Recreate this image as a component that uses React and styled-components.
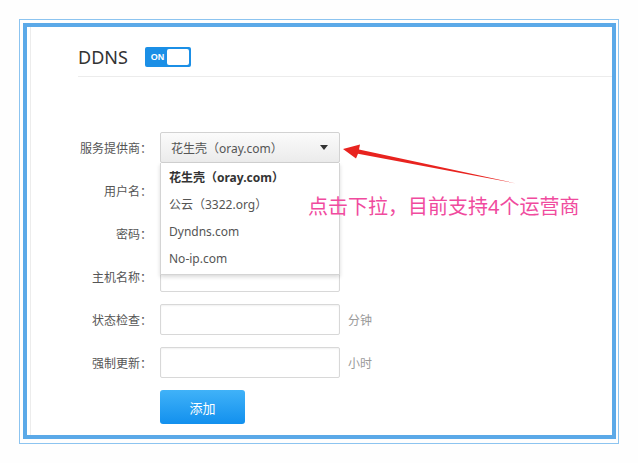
import React from "react";
import styled, { createGlobalStyle } from "styled-components";

const GlobalStyle = createGlobalStyle`
  body {
    margin: 0;
    background: #fff;
    font-family: "Noto Sans", "Noto Sans CJK SC", sans-serif;
  }
  * {
    box-sizing: border-box;
  }
`;

const providers = ["花生壳（oray.com）", "公云（3322.org）", "Dyndns.com", "No-ip.com"];

const fields = [
  { label: "用户名：" },
  { label: "密码：" },
  { label: "主机名称：" },
  { label: "状态检查：", unit: "分钟" },
  { label: "强制更新：", unit: "小时" },
];

const App = () => {
  return (
    <Page>
      <GlobalStyle />
      <Frame>
        <Inner>
          <Panel>
            <Header>
              <Title>DDNS</Title>
              <Toggle>
                <ToggleText>ON</ToggleText>
                <Knob />
              </Toggle>
            </Header>
            <Form>
              <Label>服务提供商：</Label>
              <SelectWrap>
                <Select>
                  <span>花生壳（oray.com）</span>
                  <Caret />
                </Select>
                <Menu>
                  {providers.map((p, i) => (
                    <MenuItem key={p} active={i === 0}>
                      {p}
                    </MenuItem>
                  ))}
                </Menu>
              </SelectWrap>
              <span />
              {fields.map((f) => (
                <React.Fragment key={f.label}>
                  <Label>{f.label}</Label>
                  <Input type="text" />
                  <Unit>{f.unit || ""}</Unit>
                </React.Fragment>
              ))}
              <span />
              <Button>添加</Button>
            </Form>
          </Panel>
        </Inner>
      </Frame>

      <Arrow width="180" height="46" viewBox="340 142 180 46">
        <polygon
          points="343,149 360,144.5 359,149.6 516,183.4 358,153.8 356,158.5"
          fill="#e8231f"
        />
      </Arrow>
      <Note>点击下拉，目前支持4个运营商</Note>
    </Page>
  );
};

const Page = styled.div`
  position: relative;
  width: 638px;
  height: 463px;
  padding: 19px;
  background: #fefefe;
`;

const Frame = styled.div`
  width: 600px;
  height: 425px;
  border: 1px solid #8cc4f0;
  padding: 3px 2px 4px 3px;
`;

const Inner = styled.div`
  height: 100%;
  border: 4px solid #5ba9e8;
  background: #fff;
`;

const Panel = styled.div`
  height: 100%;
  margin-left: 3px;
  border-left: 1px solid #ececec;
  padding: 20px 0 0 47px;
`;

const Header = styled.div`
  display: flex;
  align-items: center;
  box-sizing: content-box;
  height: 20px;
  padding-bottom: 9px;
  border-bottom: 1px solid #ececec;
`;

const Title = styled.h1`
  margin: 0;
  font-size: 18px;
  font-weight: 400;
  color: #333;
  line-height: 20px;
`;

const Toggle = styled.div`
  display: flex;
  align-items: center;
  justify-content: space-between;
  width: 46px;
  height: 20px;
  margin-left: 17px;
  padding: 2px;
  border-radius: 2px;
  background: #1b8fe6;
`;

const ToggleText = styled.span`
  font-family: "Liberation Sans", sans-serif;
  font-size: 9px;
  font-weight: 700;
  color: #fff;
  padding-left: 4px;
`;

const Knob = styled.span`
  width: 22px;
  height: 16px;
  border-radius: 2px;
  background: #fff;
`;

const Form = styled.div`
  display: grid;
  grid-template-columns: 74px 180px auto;
  column-gap: 8px;
  row-gap: 12px;
  align-items: center;
  margin-top: 55px;
`;

const Label = styled.label`
  font-size: 12px;
  color: #555;
  text-align: right;
  white-space: nowrap;
`;

const SelectWrap = styled.div`
  position: relative;
`;

const Select = styled.div`
  display: flex;
  align-items: center;
  justify-content: space-between;
  height: 31px;
  padding: 0 11px 0 10px;
  border: 1px solid #d2d2d2;
  border-radius: 2px;
  background: linear-gradient(#fbfbfb, #ebebeb);
  font-size: 12px;
  color: #555;
`;

const Caret = styled.span`
  width: 0;
  height: 0;
  border-left: 4px solid transparent;
  border-right: 4px solid transparent;
  border-top: 5px solid #333;
`;

const Menu = styled.div`
  position: absolute;
  top: 100%;
  left: 0;
  right: 0;
  z-index: 2;
  padding: 1px 0 2px;
  background: #fff;
  border: 1px solid #d4d4d4;
  border-top: none;
  box-shadow: 0 2px 4px rgba(0, 0, 0, 0.15);
`;

const MenuItem = styled.div`
  height: 27px;
  line-height: 27px;
  padding-left: 8px;
  font-size: 12px;
  font-weight: ${({ active }) => (active ? 700 : 400)};
  color: ${({ active }) => (active ? "#333" : "#555")};
`;

const Input = styled.input`
  height: 31px;
  width: 100%;
  border: 1px solid #d8d8d8;
  border-radius: 2px;
  box-shadow: inset 0 1px 2px rgba(0, 0, 0, 0.06);
  outline: none;
  background: #fff;
`;

const Unit = styled.span`
  font-size: 12px;
  color: #9a9a9a;
`;

const Button = styled.button`
  width: 85px;
  height: 34px;
  border: none;
  border-radius: 3px;
  background: linear-gradient(#40b2f8, #1290ee);
  color: #fff;
  font-family: inherit;
  font-size: 13px;
  cursor: pointer;
`;

const Arrow = styled.svg`
  position: absolute;
  left: 340px;
  top: 142px;
  z-index: 3;
`;

const Note = styled.div`
  position: absolute;
  left: 308px;
  top: 194px;
  z-index: 3;
  font-size: 20px;
  line-height: 26px;
  color: #f04b9e;
  white-space: nowrap;
`;

export default App;
